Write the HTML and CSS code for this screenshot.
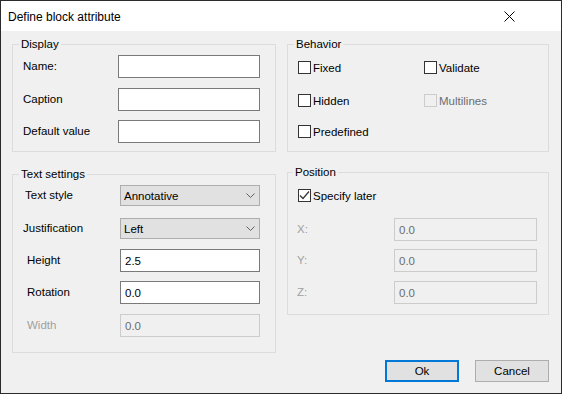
FILE: index.html
```html
<!DOCTYPE html>
<html lang="en">
<head>
  <meta charset="UTF-8">
  <title>Define block attribute</title>
  <link rel="stylesheet" href="styles.css">
</head>
<body>
  <div class="window">
    <div class="titlebar">
      <span class="title">Define block attribute</span>
      <svg class="close" width="11" height="11" viewBox="0 0 11 11">
        <path d="M0.5 0.5L10.5 10.5M10.5 0.5L0.5 10.5" stroke="#000" stroke-width="1" fill="none"/>
      </svg>
    </div>

    <div class="content">
      <div class="columns">
        <div class="column">
          <fieldset class="group group-display">
            <legend>Display</legend>
            <div class="form form-display">
              <label>Name:</label>
              <input class="edit" type="text">
              <label>Caption</label>
              <input class="edit" type="text">
              <label>Default value</label>
              <input class="edit" type="text">
            </div>
          </fieldset>

          <fieldset class="group group-text">
            <legend>Text settings</legend>
            <div class="form form-text">
              <label class="indent-2">Text style</label>
              <div class="combo">
                <span>Annotative</span>
                <svg width="9" height="5" viewBox="0 0 9 5"><path d="M0.5 0.5L4.5 4.5L8.5 0.5" stroke="#606060" fill="none"/></svg>
              </div>
              <label>Justification</label>
              <div class="combo">
                <span>Left</span>
                <svg width="9" height="5" viewBox="0 0 9 5"><path d="M0.5 0.5L4.5 4.5L8.5 0.5" stroke="#606060" fill="none"/></svg>
              </div>
              <label class="indent-4">Height</label>
              <input class="edit" type="text" value="2.5">
              <label class="indent-4">Rotation</label>
              <input class="edit" type="text" value="0.0">
              <label class="indent-4 disabled">Width</label>
              <input class="edit" type="text" value="0.0" disabled>
            </div>
          </fieldset>
        </div>

        <div class="column">
          <fieldset class="group group-behavior">
            <legend>Behavior</legend>
            <div class="checks">
              <div class="check"><span class="box"></span>Fixed</div>
              <div class="check"><span class="box"></span>Validate</div>
              <div class="check"><span class="box"></span>Hidden</div>
              <div class="check disabled"><span class="box"></span>Multilines</div>
              <div class="check"><span class="box"></span>Predefined</div>
            </div>
          </fieldset>

          <fieldset class="group group-position">
            <legend>Position</legend>
            <div class="check check-later">
              <span class="box">
                <svg width="11" height="11" viewBox="0 0 11 11"><path d="M1 5.5L4 8.5L10 1.5" stroke="#333" stroke-width="1.2" fill="none"/></svg>
              </span>Specify later
            </div>
            <div class="form form-position">
              <label class="disabled">X:</label>
              <input class="edit" type="text" value="0.0" disabled>
              <label class="disabled">Y:</label>
              <input class="edit" type="text" value="0.0" disabled>
              <label class="disabled">Z:</label>
              <input class="edit" type="text" value="0.0" disabled>
            </div>
          </fieldset>
        </div>
      </div>

      <div class="buttons">
        <button class="button button-default">Ok</button>
        <button class="button">Cancel</button>
      </div>
    </div>
  </div>
</body>
</html>
```

FILE: styles.css
```css
body {
  margin: 0;
  font-family: 'Liberation Sans', Arial, sans-serif;
  font-size: 11.5px;
  color: #000;
}
.window {
  width: 562px;
  height: 394px;
  box-sizing: border-box;
  border: 1px solid #2b2b2b;
  display: flex;
  flex-direction: column;
  background-color: #f0f0f0;
}
.titlebar {
  height: 30px;
  background-color: #fff;
  display: flex;
  align-items: center;
  justify-content: space-between;
  padding: 0 46px 0 7px;
}
.title {
  font-size: 12px;
  margin-top: 1px;
}
.close {
  display: block;
}
.content {
  flex: 1;
  display: flex;
  flex-direction: column;
  padding: 6px 12px 11px 11px;
}
.columns {
  display: flex;
  gap: 11px;
}
.column {
  display: flex;
  flex-direction: column;
}
.group {
  margin: 0;
  box-sizing: border-box;
  border: 1px solid #dcdcdc;
  padding: 0 0 0 10px;
  min-width: 0;
}
.group legend {
  margin-left: -4px;
  padding: 0 2px;
  line-height: 14px;
}
.group-display {
  width: 264px;
  height: 115px;
  padding-top: 4px;
}
.group-text {
  width: 264px;
  height: 186px;
  margin-top: 15px;
  padding-top: 3px;
}
.group-behavior {
  width: 262px;
  height: 115px;
  padding-top: 9px;
}
.group-position {
  width: 262px;
  height: 150px;
  margin-top: 13px;
  padding: 9px 0 0 9px;
}
.form {
  display: grid;
  align-items: start;
}
.form label {
  line-height: 23px;
}
.form-display {
  grid-template-columns: 95px 142px;
  grid-template-rows: 33px 32px 23px;
}
.form-text {
  grid-template-columns: 97px 140px;
  grid-template-rows: 33px 32px 32px 33px 23px;
}
.form-position {
  margin-top: 15px;
  grid-template-columns: 97px 143px;
  grid-template-rows: 31px 32px 23px;
}
.indent-2 {
  padding-left: 2px;
}
.indent-4 {
  padding-left: 4px;
}
.disabled {
  color: #a0a0a0;
}
.edit {
  box-sizing: border-box;
  width: 100%;
  height: 23px;
  margin: 0;
  padding: 0 4px;
  border: 1px solid #7a7a7a;
  background-color: #fff;
  font-family: inherit;
  font-size: 11.5px;
  color: #000;
  outline: none;
}
.edit:disabled {
  border-color: #cccccc;
  background-color: #f0f0f0;
  color: #6d6d6d;
}
.combo {
  box-sizing: border-box;
  height: 21px;
  margin-top: 1px;
  border: 1px solid #adadad;
  background-color: #e1e1e1;
  display: flex;
  align-items: center;
  justify-content: space-between;
  padding: 0 4px 0 3px;
}
.combo svg {
  display: block;
}
.checks {
  display: grid;
  grid-template-columns: 126px 120px;
  grid-template-rows: 33px 31px 15px;
  align-items: start;
}
.check {
  display: flex;
  align-items: center;
  height: 15px;
  gap: 2px;
}
.check .box {
  box-sizing: border-box;
  width: 13px;
  height: 13px;
  border: 1px solid #333;
  background-color: #fff;
  display: flex;
  align-items: center;
  justify-content: center;
}
.check.disabled {
  color: #6d6d6d;
}
.check.disabled .box {
  border-color: #cccccc;
  background-color: #f0f0f0;
}
.check-later {
  margin-left: 1px;
}
.buttons {
  margin-top: auto;
  display: flex;
  justify-content: flex-end;
  gap: 16px;
}
.button {
  box-sizing: border-box;
  width: 74px;
  height: 22px;
  margin: 0;
  padding: 0;
  border: 1px solid #adadad;
  background-color: #e1e1e1;
  font-family: inherit;
  font-size: 11.5px;
  color: #000;
}
.button-default {
  border: 2px solid #0078d7;
}
```
